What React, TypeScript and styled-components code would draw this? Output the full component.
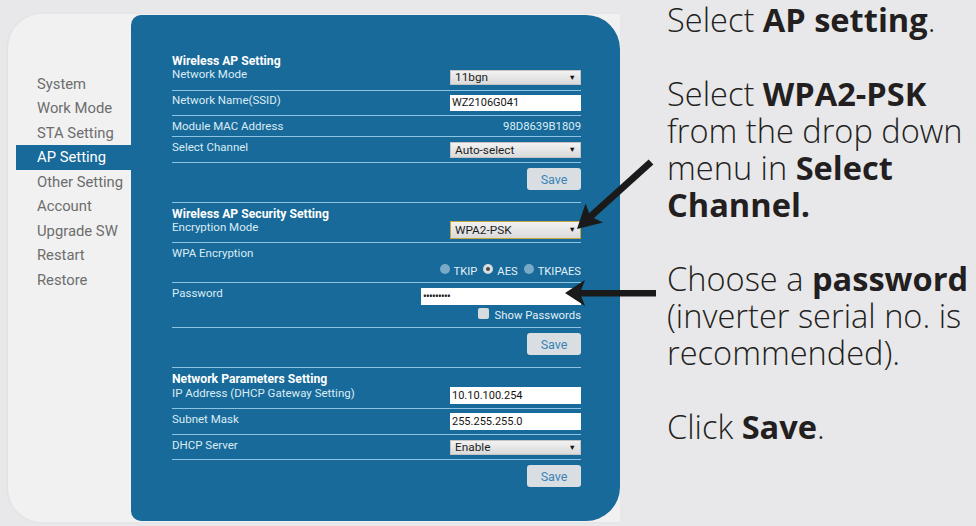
import React from "react";
import styled, { createGlobalStyle } from "styled-components";

const GlobalStyle = createGlobalStyle`
  html, body { margin: 0; padding: 0; }
  body {
    background: #e8e8ea;
    width: 976px;
    height: 526px;
    overflow: hidden;
    font-family: Roboto, "Liberation Sans", Arial, sans-serif;
  }
`;

const BLUE = "#176a99";
const LINE = "#8cc3e3";

const Page = styled.div`
  position: relative;
  display: flex;
  align-items: flex-start;
  width: 976px;
  height: 526px;
`;

const Screen = styled.div`
  display: flex;
  margin: 14px 0 0 8px;
  width: 612px;
  height: 508px;
  background: #f1f1f1;
  border-radius: 34px 0 0 34px;
  box-shadow: -1px 0 3px rgba(0, 0, 0, 0.04);
`;

const Sidebar = styled.nav`
  width: 123px;
  flex: none;
  padding-top: 57.5px;
  box-sizing: border-box;
`;

const MenuItem = styled.div<{ $active?: boolean }>`
  margin-left: 8px;
  padding-left: 21px;
  height: 24.5px;
  line-height: 24.5px;
  font-family: Roboto, "Liberation Sans", sans-serif;
  font-size: 14.8px;
  color: ${(p) => (p.$active ? "#ffffff" : "#6d6d6d")};
  background: ${(p) => (p.$active ? BLUE : "transparent")};
  white-space: nowrap;
`;

const Panel = styled.section`
  flex: 1;
  margin-top: 1px;
  height: 506px;
  background: ${BLUE};
  border-radius: 10px 34px 34px 10px;
  padding: 40px 39px 0 41px;
  box-sizing: border-box;
  color: #dcecf6;
`;

const Heading = styled.div<{ $mt?: number }>`
  margin-top: ${(p) => p.$mt ?? 0}px;
  height: 13px;
  font: 700 12.2px/13px Roboto, "Liberation Sans", sans-serif;
  color: #ffffff;
  white-space: nowrap;
`;

const Row = styled.div<{ $h: number; $last?: boolean }>`
  display: flex;
  justify-content: space-between;
  align-items: flex-start;
  height: ${(p) => p.$h}px;
  border-bottom: ${(p) => (p.$last ? "none" : `1px solid ${LINE}`)};
`;

const Label = styled.div<{ $pt: number }>`
  padding-top: ${(p) => p.$pt}px;
  font: 400 11.5px/13px Roboto, "Liberation Sans", sans-serif;
  color: #dcecf6;
  white-space: nowrap;
`;

const Controls = styled.div<{ $mt: number }>`
  margin-top: ${(p) => p.$mt}px;
  margin-left: auto;
  display: flex;
  flex-direction: column;
  align-items: flex-end;
`;

const SelectBox = styled.div<{ $h: number; $focus?: boolean }>`
  width: 131px;
  height: ${(p) => p.$h}px;
  box-sizing: border-box;
  padding-left: 4px;
  background: linear-gradient(#f2f2f2, #dadada);
  border: 1px solid ${(p) => (p.$focus ? "#c9a640" : "#c4c4c4")};
  font: 400 11.8px Roboto, "Liberation Sans", sans-serif;
  line-height: ${(p) => p.$h - 2}px;
  color: #1e1e1e;
  display: flex;
  justify-content: space-between;
  align-items: center;
`;

const Caret = styled.span`
  font-size: 7.5px;
  color: #111;
  margin-right: 4px;
`;

const TextInput = styled.div<{ $h: number; $w?: number }>`
  width: ${(p) => p.$w ?? 131}px;
  height: ${(p) => p.$h}px;
  box-sizing: border-box;
  padding-left: 2px;
  background: #ffffff;
  font: 400 11px Roboto, "Liberation Sans", sans-serif;
  line-height: ${(p) => p.$h}px;
  color: #151515;
`;

const Dots = styled.span`
  font-size: 10px;
  font-weight: 700;
  letter-spacing: -0.6px;
  color: #222;
`;

const Value = styled.div<{ $pt: number }>`
  padding-top: ${(p) => p.$pt}px;
  font: 400 11.3px/13px Roboto, "Liberation Sans", sans-serif;
  color: #dcecf6;
`;

const SaveButton = styled.button`
  width: 54px;
  height: 22px;
  border: none;
  border-radius: 3px;
  background: #d9dee2;
  color: #3a82b8;
  font: 400 12.5px Roboto, "Liberation Sans", sans-serif;
  padding: 0;
`;

const RadioGroup = styled.div`
  display: flex;
  align-items: center;
  height: 14px;
`;

const RadioOption = styled.label`
  display: flex;
  align-items: center;
  margin-left: 6px;
  font: 400 11.2px Roboto, "Liberation Sans", sans-serif;
  color: #e3f0f8;
`;

const RadioDot = styled.span<{ $checked?: boolean }>`
  width: 10px;
  height: 10px;
  border-radius: 50%;
  margin-right: 4px;
  margin-top: -4px;
  box-sizing: border-box;
  background: ${(p) => (p.$checked ? "#4a4a4a" : "#79abc8")};
  border: ${(p) => (p.$checked ? "3px solid #d8dde0" : "none")};
`;

const CheckRow = styled.div`
  display: flex;
  align-items: center;
  margin-top: 4px;
  height: 13px;
  font: 400 11.3px Roboto, "Liberation Sans", sans-serif;
  color: #e3f0f8;
`;

const CheckBox = styled.span`
  width: 11px;
  height: 11px;
  margin-right: 6px;
  margin-top: -4px;
  border-radius: 2px;
  background: #d6dbde;
`;

const Instructions = styled.div`
  margin-left: 47px;
  padding-top: 1px;
  font-family: "Open Sans", "Noto Sans", sans-serif;
  font-weight: 300;
  font-size: 32.6px;
  line-height: 37px;
  color: #231f20;
  white-space: nowrap;
`;

const Para = styled.p`
  margin: 0 0 37px 0;
`;

const Strong = styled.b`
  font-weight: 700;
`;

const ArrowLayer = styled.svg`
  position: absolute;
  left: 0;
  top: 0;
  pointer-events: none;
`;

const menu = [
  "System",
  "Work Mode",
  "STA Setting",
  "AP Setting",
  "Other Setting",
  "Account",
  "Upgrade SW",
  "Restart",
  "Restore",
];

export default function App() {
  return (
    <>
      <GlobalStyle />
      <Page>
        <Screen>
          <Sidebar>
            {menu.map((m) => (
              <MenuItem key={m} $active={m === "AP Setting"}>
                {m}
              </MenuItem>
            ))}
          </Sidebar>
          <Panel>
            <Heading>Wireless AP Setting</Heading>
            <Row $h={22}>
              <Label $pt={0}>Network Mode</Label>
              <Controls $mt={2}>
                <SelectBox $h={15}>
                  11bgn<Caret>▼</Caret>
                </SelectBox>
              </Controls>
            </Row>
            <Row $h={24}>
              <Label $pt={3}>Network Name(SSID)</Label>
              <Controls $mt={4}>
                <TextInput $h={16}>WZ2106G041</TextInput>
              </Controls>
            </Row>
            <Row $h={20}>
              <Label $pt={4}>Module MAC Address</Label>
              <Value $pt={4}>98D8639B1809</Value>
            </Row>
            <Row $h={25}>
              <Label $pt={4}>Select Channel</Label>
              <Controls $mt={5}>
                <SelectBox $h={16}>
                  Auto-select<Caret>▼</Caret>
                </SelectBox>
              </Controls>
            </Row>
            <Row $h={39}>
              <Controls $mt={5}>
                <SaveButton>Save</SaveButton>
              </Controls>
            </Row>

            <Heading $mt={5}>Wireless AP Security Setting</Heading>
            <Row $h={21}>
              <Label $pt={0}>Encryption Mode</Label>
              <Controls $mt={0}>
                <SelectBox $h={18} $focus>
                  WPA2-PSK<Caret>▼</Caret>
                </SelectBox>
              </Controls>
            </Row>
            <Row $h={39}>
              <Label $pt={4}>WPA Encryption</Label>
              <Controls $mt={21}>
                <RadioGroup>
                  <RadioOption>
                    <RadioDot />
                    TKIP
                  </RadioOption>
                  <RadioOption>
                    <RadioDot $checked />
                    AES
                  </RadioOption>
                  <RadioOption>
                    <RadioDot />
                    TKIPAES
                  </RadioOption>
                </RadioGroup>
              </Controls>
            </Row>
            <Row $h={44}>
              <Label $pt={4}>Password</Label>
              <Controls $mt={5}>
                <TextInput $h={17} $w={160}>
                  <Dots>•••••••••</Dots>
                </TextInput>
                <CheckRow>
                  <CheckBox />
                  Show Passwords
                </CheckRow>
              </Controls>
            </Row>
            <Row $h={39}>
              <Controls $mt={5}>
                <SaveButton>Save</SaveButton>
              </Controls>
            </Row>

            <Heading $mt={5}>Network Parameters Setting</Heading>
            <Row $h={22}>
              <Label $pt={1}>IP Address (DHCP Gateway Setting)</Label>
              <Controls $mt={1}>
                <TextInput $h={17}>10.10.100.254</TextInput>
              </Controls>
            </Row>
            <Row $h={25}>
              <Label $pt={4}>Subnet Mask</Label>
              <Controls $mt={4}>
                <TextInput $h={17}>255.255.255.0</TextInput>
              </Controls>
            </Row>
            <Row $h={24}>
              <Label $pt={4}>DHCP Server</Label>
              <Controls $mt={5}>
                <SelectBox $h={15}>
                  Enable<Caret>▼</Caret>
                </SelectBox>
              </Controls>
            </Row>
            <Row $h={30} $last>
              <Controls $mt={5}>
                <SaveButton>Save</SaveButton>
              </Controls>
            </Row>
          </Panel>
        </Screen>

        <Instructions>
          <Para>
            Select <Strong>AP setting</Strong>.
          </Para>
          <Para>
            Select <Strong>WPA2-PSK</Strong>
            <br />
            from the drop down
            <br />
            menu in <Strong>Select</Strong>
            <br />
            <Strong>Channel.</Strong>
          </Para>
          <Para>
            Choose a <Strong>password</Strong>
            <br />
            (inverter serial no. is
            <br />
            recommended).
          </Para>
          <Para>
            Click <Strong>Save</Strong>.
          </Para>
        </Instructions>

        <ArrowLayer width="976" height="526" viewBox="0 0 976 526">
          <line x1="651" y1="162" x2="590" y2="217" stroke="#1a1a1a" strokeWidth="7" />
          <polygon points="577,229 585.5,203.5 590.5,216.5 603,222.5" fill="#1a1a1a" />
          <rect x="578" y="290" width="78" height="6.5" fill="#1a1a1a" />
          <polygon points="565,293 585,280 580,293 585,306" fill="#1a1a1a" />
        </ArrowLayer>
      </Page>
    </>
  );
}
